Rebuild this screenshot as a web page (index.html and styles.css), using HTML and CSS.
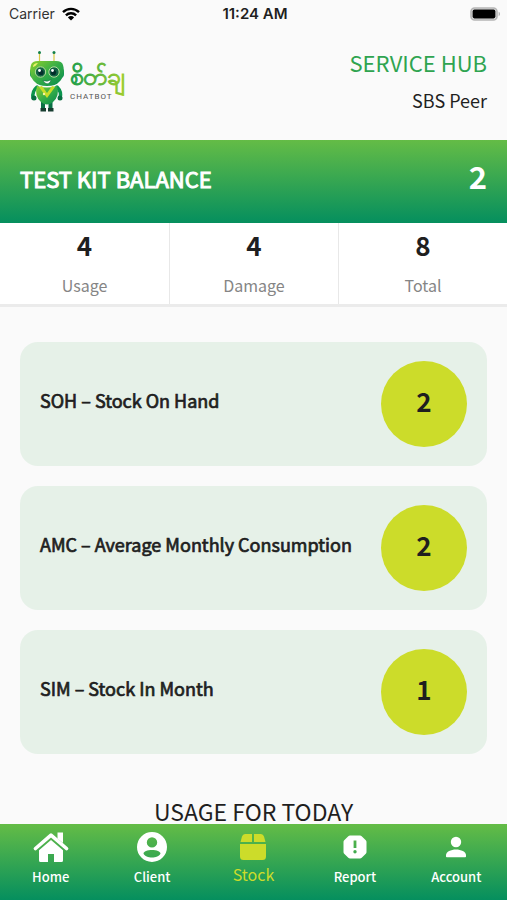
FILE: index.html
```html
<!DOCTYPE html>
<html lang="en">
<head>
<meta charset="utf-8">
<meta name="viewport" content="width=device-width, initial-scale=1">
<title>Stock</title>
<link rel="stylesheet" href="styles.css">
</head>
<body>
<div class="app">
  <div class="status">
    <span class="status-carrier">Carrier
      <svg width="18" height="14" viewBox="0 0 18 14" aria-hidden="true"><g fill="none" stroke="#000" stroke-width="2.4"><path d="M1 5.2a11.4 11.4 0 0 1 16 0"/><path d="M3.9 8.3a7.2 7.2 0 0 1 10.2 0"/></g><path d="M5.9 10.4a4.4 4.4 0 0 1 6.2 0L9 13.6z"/></svg>
    </span>
    <span class="status-time">11:24 AM</span>
    <svg class="status-battery" width="31" height="14" viewBox="0 0 31 14" aria-hidden="true"><rect x="1" y="1" width="26" height="12" rx="3.6" fill="#ddd" stroke="#b5b5b5" stroke-width="1.600"/><rect x="2.600" y="2.600" width="22.800" height="8.800" rx="1.800"/><path d="M28.6 4.8c1.900.7 1.900 3.700 0 4.400z" fill="#b5b5b5"/></svg>
  </div>
  <header class="header">
    <svg class="logo" width="100" height="64" viewBox="0 0 100 64" role="img" aria-label="Chatbot">
      <defs>
        <linearGradient id="body" x1="0" y1="0" x2="1" y2="1"><stop offset="0" stop-color="#8fd02c"/><stop offset=".5" stop-color="#35ad48"/><stop offset="1" stop-color="#078a4d"/></linearGradient>
        <linearGradient id="word" x1="0" y1="0" x2="1" y2="0"><stop offset="0" stop-color="#1c9e4c"/><stop offset="1" stop-color="#9ccc2d"/></linearGradient>
      </defs>
      <g fill="none" stroke="#d9c944" stroke-width="1.200"><path d="M9.500 2v10M24 2v10"/></g>
      <circle cx="9.500" cy="1.600" r="1.500" fill="#13804a"/><circle cx="24" cy="1.600" r="1.500" fill="#13804a"/>
      <rect x="0" y="17" width="34" height="10" rx="4" fill="#0a9550"/>
      <path d="M1 14q1-4 7-4h18q6 0 7 4c2 7 0 14-4 17q-3 4-12 4T5 31C1 28-1 21 1 14z" fill="url(#body)"/>
      <path d="M3 15q1-3 5-3-2 3-5 4z" fill="#eef36b"/>
      <g fill="#126344" stroke="#b4df9b" stroke-width="1"><circle cx="10.500" cy="21" r="5.200"/><circle cx="24" cy="21" r="5.200"/></g>
      <g fill="#052f2c"><circle cx="11" cy="21.500" r="2.600"/><circle cx="23.500" cy="21.500" r="2.600"/></g>
      <g fill="#fff"><circle cx="9.500" cy="19.500" r="1.400"/><circle cx="22.500" cy="19.500" r="1.400"/></g>
      <path d="M13 29.500q5 2 8-1-1 5-5 4-2-1-3-3z" fill="#fff" stroke="#075c36" stroke-width=".5"/>
      <path d="M7 36q-5 4-4 11M27 36q5 5 3 11" fill="none" stroke="#0b944d" stroke-width="3.500" stroke-linecap="round"/>
      <circle cx="4" cy="47" r="2.500" fill="#086e41"/><circle cx="30" cy="47" r="2.500" fill="#086e41"/>
      <path d="M13 51v7M20.500 51v7" stroke="#0b7045" stroke-width="4"/><path d="M10.500 57h5.500v3.500h-5.500zM18 57h5.500v3.500H18z" fill="#173d30"/>
      <path d="M7 35q10 3 20 0 3 10-4 16-6 5-12 0Q4 45 7 35z" fill="url(#body)"/>
      <path d="M9 36l8 11 8-11-3-1-5 7-5-7z" fill="#c7dd29"/><circle cx="14" cy="43" r="1.200" fill="#f6f3a2"/>
      <text class="logo-word" x="40" y="34" fill="url(#word)" stroke="url(#word)">စိတ်ချ</text>
      <text class="logo-sub" x="40" y="48">CHATBOT</text>
    </svg>
    <div class="header-text">
      <h1 class="title">SERVICE HUB</h1>
      <p class="subtitle">SBS Peer</p>
    </div>
  </header>
  <main class="content">
    <section class="balance">
      <h2 class="balance-label">TEST KIT BALANCE</h2>
      <strong class="balance-value">2</strong>
    </section>
    <dl class="stats">
      <div class="stat"><dd>4</dd><dt>Usage</dt></div>
      <div class="stat"><dd>4</dd><dt>Damage</dt></div>
      <div class="stat"><dd>8</dd><dt>Total</dt></div>
    </dl>
    <ul class="cards">
      <li class="card"><span class="card-label">SOH – Stock On Hand</span><span class="card-value">2</span></li>
      <li class="card"><span class="card-label">AMC – Average Monthly Consumption</span><span class="card-value">2</span></li>
      <li class="card"><span class="card-label">SIM – Stock In Month</span><span class="card-value">1</span></li>
    </ul>
    <h2 class="today">USAGE FOR TODAY</h2>
  </main>
  <nav class="tabs">
    <a class="tab" href="#home"><svg width="36" height="32" viewBox="0 0 36 32" aria-hidden="true"><path d="M2.500 17.500 18 4.200l15.500 13.300" fill="none" stroke="currentColor" stroke-width="3.600" stroke-linecap="round" stroke-linejoin="round"/><path d="M24.500 1.500H30V12l-5.500-4.300z"/><path d="M18 9 30 19.300V29.500q0 1.500-1.500 1.500H21v-8h-6v8H7.500Q6 31 6 29.500V19.300z"/></svg>Home</a>
    <a class="tab" href="#client"><svg width="36" height="32" viewBox="0 0 36 32" aria-hidden="true"><path fill-rule="evenodd" d="M18 1a15 15 0 1 0 0 30 15 15 0 0 0 0-30zM18 6.200a5.200 5.200 0 1 1 0 10.400 5.200 5.200 0 0 1 0-10.400zM18 19c4.500 0 8.500 1.600 8.500 3.500C25.500 25 21.500 26.600 18 26.600s-7.500-1.600-8.500-4.100C9.500 20.600 13.500 19 18 19z"/></svg>Client</a>
    <a class="tab tab-active" href="#stock" aria-current="page"><svg width="36" height="32" viewBox="0 0 36 32" aria-hidden="true"><path d="M10 3h7v8H5.500L7 5.500Q7.800 3 10 3zM19 3h7q2.200 0 3 2.500l1.500 5.500H19zM5 13h26v12.500q0 3.500-3.500 3.500h-19Q5 29 5 25.500z"/></svg>Stock</a>
    <a class="tab" href="#report"><svg width="36" height="32" viewBox="0 0 36 32" aria-hidden="true"><path fill-rule="evenodd" d="M13 4.500h10q1 0 1.700.7l4.100 4.100q.7.700.7 1.700v10q0 1-.7 1.700l-4.100 4.100q-.7.700-1.700.7H13q-1 0-1.700-.7l-4.100-4.100q-.7-.7-.7-1.700V11q0-1 .7-1.700l4.100-4.100q.7-.7 1.700-.7zM16.600 9.500h2.800v7.500h-2.800zM18 19a1.700 1.700 0 1 0 0 3.400 1.700 1.700 0 0 0 0-3.400z"/></svg>Report</a>
    <a class="tab" href="#account"><svg width="36" height="32" viewBox="0 0 36 32" aria-hidden="true"><circle cx="18" cy="11" r="5.200"/><path d="M8 25.500V24c0-3.400 5-5.600 10-5.600S28 20.600 28 24v1.500q0 .8-.8.8H8.800q-.8 0-.8-.8z"/></svg>Account</a>
  </nav>
</div>
</body>
</html>
```
FILE: styles.css
```css
* { box-sizing: border-box; margin: 0; padding: 0; }

body {
  background: #fafafa;
  color: #1f1f1f;
  font-family: "Noto Sans CJK SC", "Noto Sans", sans-serif;
}

.app { display: flex; flex-direction: column; height: 100vh; overflow: hidden; }

.status {
  display: grid;
  grid-template-columns: 1fr auto 1fr;
  align-items: center;
  flex: none;
  height: 27px;
  padding: 0 6px 0 9px;
  font-family: Inter, sans-serif;
  font-size: 14px;
}
.status-carrier { display: flex; align-items: center; gap: 7px; color: #333; }
.status-time { font-size: 15px; font-weight: 600; }
.status-battery { justify-self: end; }

.header {
  display: flex;
  justify-content: space-between;
  align-items: flex-start;
  flex: none;
  height: 113px;
  padding: 20px 20px 0 30px;
}
.logo { margin-top: 4px; overflow: visible; }
.logo-word { font-size: 25px; stroke-width: 1px; }
.logo-sub { font-family: Roboto, sans-serif; font-size: 8px; letter-spacing: 1px; fill: #555; }
.header-text { text-align: right; }
.title { color: #2fa450; font-size: 22px; font-weight: 400; line-height: 30px; }
.subtitle { margin-top: 8px; font-size: 18px; line-height: 30px; }

.content { flex: 1; min-height: 0; overflow: hidden; }

.balance {
  display: flex;
  justify-content: space-between;
  align-items: center;
  height: 83px;
  padding: 0 20px 8px;
  background: linear-gradient(#64bc46, #058f5e);
  color: #fff;
}
.balance-label { font-size: 22px; font-weight: 400; line-height: 32px; -webkit-text-stroke: 1px; }
.balance-value { padding-bottom: 4px; font-size: 31px; line-height: 40px; }

.stats {
  display: grid;
  grid-template-columns: repeat(3, 1fr);
  background: #fff;
  border-bottom: 3px solid #ebebeb;
}
.stat { display: flex; flex-direction: column; padding: 6px 0 3px; text-align: center; }
.stat + .stat { border-left: 1px solid #e8e8e8; }
.stat dd { font-size: 26px; font-weight: 700; line-height: 32px; }
.stat dt { margin-top: 9px; color: #858585; font-size: 16px; line-height: 31px; }

.cards { display: grid; gap: 20px; padding: 35px 20px 0; list-style: none; }
.card {
  display: flex;
  justify-content: space-between;
  align-items: center;
  height: 124px;
  padding: 0 20px;
  border-radius: 18px;
  background: #e6f1e8;
}
.card-label { padding-bottom: 8px; font-size: 18px; line-height: 28px; -webkit-text-stroke: 0.04em; }
.card-value {
  display: flex;
  justify-content: center;
  align-items: center;
  width: 86px;
  height: 86px;
  padding-bottom: 8px;
  border-radius: 50%;
  background: #ccdc2a;
  font-size: 26px;
  font-weight: 700;
}

.today { margin-top: 40px; font-size: 23px; font-weight: 400; line-height: 34px; text-align: center; }

.tabs {
  display: grid;
  grid-template-columns: repeat(5, 1fr);
  flex: none;
  height: 76px;
  padding-top: 7px;
  background: linear-gradient(#64bc46, #058f5e);
}
.tab {
  display: flex;
  flex-direction: column;
  align-items: center;
  color: #fff;
  font-size: 13px;
  font-weight: 500;
  line-height: 28px;
  text-decoration: none;
}
.tab svg { fill: currentColor; }
.tab-active { color: #ccdc2a; font-size: 16px; font-weight: 400; line-height: 22px; }
```
